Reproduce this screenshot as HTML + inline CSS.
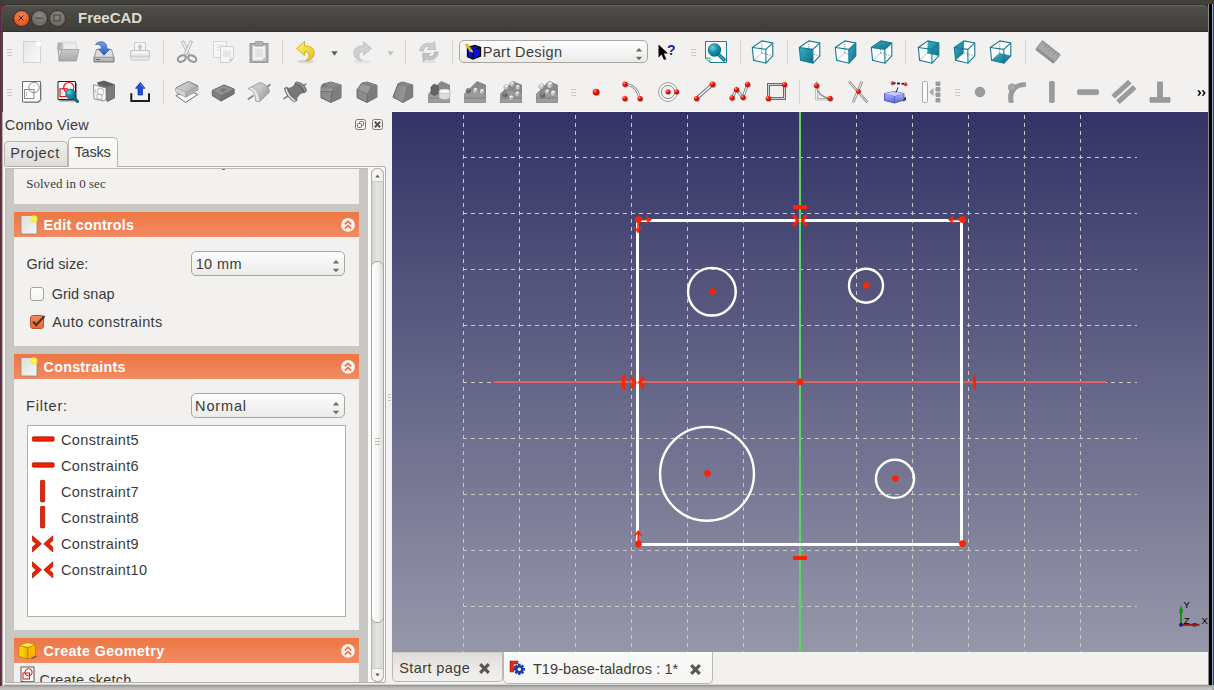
<!DOCTYPE html>
<html>
<head>
<meta charset="utf-8">
<title>FreeCAD</title>
<style>
*{box-sizing:border-box;margin:0;padding:0}
html,body{width:1214px;height:690px;overflow:hidden;background:#3c3b37;font-family:"Liberation Sans",sans-serif;color:#3c3b37;font-size:15px;line-height:18px}
.abs{position:absolute}
.t{position:absolute;white-space:nowrap;font-size:15px;line-height:18px;color:#3c3b37}
svg{position:absolute;overflow:visible}
#desk-top{left:0;top:0;width:1214px;height:5px;background:linear-gradient(#403f3a 0,#403f3a 4px,#353430 4px)}
#desk-left{left:0;top:5px;width:4px;height:681px;background:linear-gradient(90deg,#5a2a40 0,#5a2a40 1px,#b41d24 1px,#b41d24 2px,#b0ada8 2px,#b0ada8 3px,#ecebe9 3px)}
.corner{position:absolute;top:5px;width:7px;height:7px;background:#7e1216}
#desk-left2{left:2px;top:4px;width:1px;height:108px;background:#454440}
#desk-right{left:1208px;top:4px;width:6px;height:681px;background:linear-gradient(90deg,#8c8c8c 0,#8c8c8c 1px,#000 1px,#000 4px,#9aa3bd 4px,#9aa3bd 4.6px,#2b3f7c 4.6px)}
#desk-right2{left:1212px;top:685px;width:2px;height:5px;background:#a9a9ab}
#desk-bottom{left:0;top:684px;width:1214px;height:6px;background:linear-gradient(#d5d4d2 0,#d5d4d2 1px,#8f8e8c 1px,#b3b2b0 3px,#c9c8c6)}
#titlebar{left:2px;top:5px;width:1206px;height:27px;background:linear-gradient(#504f49,#4a4943 25%,#3e3d39);border-top:1px solid #67655f;border-bottom:1px solid #32312d;border-radius:5px 5px 0 0}
#title{left:78px;top:8px;font-size:15px;font-weight:bold;color:#dfdbd2;line-height:20px}
.wbtn{position:absolute;width:17px;height:17px;border-radius:50%;top:9.5px}
#win{left:3px;top:32px;width:1205px;height:652px;background:#f2f1f0}
#view{left:392px;top:112px;width:816px;height:540px;background:linear-gradient(#333366,#9797aa);overflow:hidden}
.sep{position:absolute;width:1px;height:24px;background:#d9d6d2}
.grip{position:absolute;width:5px;height:1px;background:#cdcac5;box-shadow:0 3px 0 #cdcac5,0 6px 0 #cdcac5}
.hdr{position:absolute;left:14px;width:345px;height:25px;background:linear-gradient(#ee7643,#f28b63)}
.hdr b{position:absolute;left:30px;top:3px;font-size:15px;line-height:18px;color:#fff;font-weight:bold;white-space:nowrap}
.body{position:absolute;left:14px;width:345px;background:#f2f1f0}
.combo{position:absolute;border:1px solid #aaa7a2;border-radius:5px;background:linear-gradient(#fdfdfd,#ecebea)}
</style>
</head>
<body>
<div class="abs" id="desk-top"></div>
<div class="abs" id="desk-bottom"></div>
<div class="abs" id="desk-left"></div>
<div class="abs" id="desk-left2"></div>
<div class="corner" style="left:2px"></div><div class="corner" style="left:1201px"></div>
<div class="abs" id="titlebar"></div>
<div class="abs" id="desk-right"></div>
<div class="abs" id="desk-right2"></div>
<div class="abs" id="win"></div>
<div class="wbtn" style="left:12.7px;background:radial-gradient(circle at 50% 30%,#f0855a,#df5a25 70%,#c34a1a);border:1px solid #3a2a22"></div>
<div class="wbtn" style="left:30.7px;background:radial-gradient(circle at 50% 30%,#8a8880,#6e6c65 70%,#5c5a54);border:1px solid #33322e"></div>
<div class="wbtn" style="left:48.7px;background:radial-gradient(circle at 50% 30%,#8a8880,#6e6c65 70%,#5c5a54);border:1px solid #33322e"></div>
<svg style="left:13.2px;top:10px" width="52" height="16" viewBox="0 0 52 16"><path d="M5.5 5.5l5 5m0-5l-5 5" stroke="#4a1e0c" stroke-width="1" fill="none"/><path d="M22.3 8.2h7.4" stroke="#3f3e39" stroke-width="1"/><rect x="41" y="5" width="6" height="6" fill="none" stroke="#3f3e39" stroke-width="1"/></svg>
<div class="abs" id="title">FreeCAD</div>
<svg width="0" height="0" style="left:0;top:0"><defs>
<radialGradient id="rb" cx="0.35" cy="0.3" r="0.7"><stop offset="0" stop-color="#ffb0a0"/><stop offset="0.35" stop-color="#ff2a10"/><stop offset="1" stop-color="#b00000"/></radialGradient>
<linearGradient id="gl" x1="0" y1="0" x2="1" y2="1"><stop offset="0" stop-color="#e4e4e4"/><stop offset="1" stop-color="#fafafa"/></linearGradient>
<linearGradient id="gm" x1="0" y1="0" x2="0" y2="1"><stop offset="0" stop-color="#c9c9c9"/><stop offset="1" stop-color="#a9a9a9"/></linearGradient>
<linearGradient id="gd" x1="0" y1="0" x2="1" y2="1"><stop offset="0" stop-color="#a2a2a2"/><stop offset="1" stop-color="#7e7e7e"/></linearGradient>
<linearGradient id="tl" x1="0" y1="0" x2="1" y2="1"><stop offset="0" stop-color="#3fb0c8"/><stop offset="1" stop-color="#0a6e86"/></linearGradient>
<radialGradient id="tb" cx="0.35" cy="0.3" r="0.75"><stop offset="0" stop-color="#6fd0e0"/><stop offset="0.5" stop-color="#1894ae"/><stop offset="1" stop-color="#0a6a80"/></radialGradient>
<linearGradient id="bl" x1="0" y1="0" x2="0" y2="1"><stop offset="0" stop-color="#6aa0e8"/><stop offset="1" stop-color="#2c5fb8"/></linearGradient>
<linearGradient id="yl" x1="0" y1="0" x2="1" y2="1"><stop offset="0" stop-color="#fff27a"/><stop offset="1" stop-color="#e8c21a"/></linearGradient>
<linearGradient id="bx" x1="0" y1="0" x2="0" y2="1"><stop offset="0" stop-color="#b9c4ff"/><stop offset="1" stop-color="#5a68d8"/></linearGradient>
<linearGradient id="padt" x1="0" y1="0" x2="1" y2="0.3"><stop offset="0" stop-color="#dadada"/><stop offset="1" stop-color="#b2b2b2"/></linearGradient>
<linearGradient id="revg" x1="0" y1="0" x2="1" y2="0.6"><stop offset="0" stop-color="#d6d6d6"/><stop offset="0.6" stop-color="#c2c2c2"/><stop offset="1" stop-color="#9c9c9c"/></linearGradient>
<linearGradient id="filg" x1="0" y1="0" x2="0.2" y2="1"><stop offset="0" stop-color="#6e6e6e"/><stop offset="1" stop-color="#9e9e9e"/></linearGradient>
<linearGradient id="filg2" x1="0" y1="0" x2="1" y2="0.3"><stop offset="0" stop-color="#808080"/><stop offset="1" stop-color="#9a9a9a"/></linearGradient>
</defs></svg>
<div class="sep" style="left:163px;top:40px"></div>
<div class="sep" style="left:282px;top:40px"></div>
<div class="sep" style="left:405px;top:40px"></div>
<div class="sep" style="left:452px;top:40px"></div>
<div class="sep" style="left:740px;top:40px"></div>
<div class="sep" style="left:787px;top:40px"></div>
<div class="sep" style="left:905px;top:40px"></div>
<div class="sep" style="left:1025px;top:40px"></div>
<div class="sep" style="left:163px;top:80px"></div>
<div class="sep" style="left:799px;top:80px"></div>
<div class="grip" style="left:7px;top:49px"></div>
<div class="grip" style="left:690.5px;top:49px"></div>
<div class="grip" style="left:7px;top:89px"></div>
<div class="grip" style="left:570.5px;top:89px"></div>
<div class="grip" style="left:955px;top:89px"></div>
<svg style="left:20px;top:40px" width="24" height="24" viewBox="0 0 24 24"><rect x="3.5" y="1.5" width="17" height="21" fill="url(#gl)" stroke="#d2d2d2"/><circle cx="18.5" cy="4" r="2.8" fill="#fff" opacity="0.95"/></svg>
<svg style="left:56px;top:40px" width="24" height="24" viewBox="0 0 24 24"><path d="M2 3h7l1.500 2h9.500v5h-18z" fill="#b8b8b8" stroke="#a2a2a2" stroke-width="0.800"/><path d="M6.500 2h13.500v9h-13.500z" fill="#f5f5f5" stroke="#c6c6c6" stroke-width="0.700"/><path d="M7.500 3.500h13v8h-13z" fill="#ededed" stroke="#cdcdcd" stroke-width="0.500"/><path d="M5.500 9.500h17.500l-2.600 11.500H2.800z" fill="url(#gm)" stroke="#9c9c9c" stroke-width="0.800"/><path d="M2 6l1.200 14.500" stroke="#a2a2a2" stroke-width="1.200"/></svg>
<svg style="left:92px;top:40px" width="24" height="24" viewBox="0 0 24 24"><path d="M4.5 9.5h15l2.5 8v4.5h-20V17.5z" fill="#dcdcdc" stroke="#8a8a8a" stroke-width="0.9"/><path d="M2.3 17.3h19.4v4.4H2.3z" fill="url(#gm)" stroke="#7e7e7e" stroke-width="0.8"/><path d="M4 19.5h4" stroke="#666" stroke-width="1"/><path d="M15 19h4.5v1.6H15z" fill="#bdbdbd"/><path d="M3.5 4.5C6 0.8 12.5 0.3 14.6 5.5L14.8 9h3L12 15.2 6.6 9h3.2C9.8 6 7.5 3.8 3.5 4.5z" fill="url(#bl)" stroke="#2a56a8" stroke-width="0.7"/></svg>
<svg style="left:128px;top:40px" width="24" height="24" viewBox="0 0 24 24"><rect x="6.5" y="2.5" width="11" height="9" fill="#f5f5f5" stroke="#cfcfcf"/><path d="M12 4l3 3.2h-1.8V10h-2.4V7.2H9z" fill="#c4c4c4"/><path d="M2.5 12q0-1.5 1.5-1.5h16q1.500 0 1.500 1.500v6.500q0 1.500-1.500 1.500h-16q-1.500 0-1.500-1.500z" fill="#ececec" stroke="#c4c4c4"/><path d="M3 16.500h18" stroke="#d0d0d0" stroke-width="2"/><path d="M5 12.500h14" stroke="#fff" stroke-width="1.500"/></svg>
<svg style="left:175px;top:40px" width="24" height="24" viewBox="0 0 24 24"><path d="M6.500 1.500L9 1L14.500 13.500L12.500 15z" fill="#f1f1f1" stroke="#a9a9a9" stroke-width="0.800"/><path d="M17.500 1.500L15 1L9.500 13.500L11.500 15z" fill="#f1f1f1" stroke="#a9a9a9" stroke-width="0.800"/><ellipse cx="6.800" cy="18.600" rx="4.300" ry="2.900" transform="rotate(-28 6.800 18.600)" fill="none" stroke="#969696" stroke-width="2.100"/><ellipse cx="17.200" cy="18.600" rx="4.300" ry="2.900" transform="rotate(28 17.200 18.600)" fill="none" stroke="#969696" stroke-width="2.100"/></svg>
<svg style="left:211px;top:40px" width="24" height="24" viewBox="0 0 24 24"><rect x="2.500" y="1.500" width="13" height="16" fill="#f7f7f7" stroke="#d6d6d6"/><path d="M5 5h8M5 7.500h8M5 10h8" stroke="#e2e2e2"/><path d="M9.500 6.500h13v12l-4 4h-9z" fill="#f7f7f7" stroke="#cdcdcd"/><path d="M12 10.500h8v6.500h-8z" fill="#e6e6e6"/><path d="M22.500 18.500h-4v4z" fill="#c9c9c9"/></svg>
<svg style="left:247px;top:40px" width="24" height="24" viewBox="0 0 24 24"><rect x="3" y="3.500" width="18" height="19" fill="#a9a9a9" stroke="#9a9a9a"/><rect x="5.500" y="5.500" width="13" height="15" fill="#f1f1f1"/><path d="M8 9h8v8H8z" fill="#e2e2e2"/><path d="M8 2.500q0-1 1-1h6q1 0 1 1V6H8z" fill="#b3b3b3" stroke="#9a9a9a" stroke-width="0.800"/><path d="M18.500 16.500v4h-4z" fill="#bdbdbd"/></svg>
<svg style="left:294px;top:40px" width="24" height="24" viewBox="0 0 24 24"><ellipse cx="12" cy="21.500" rx="8.500" ry="1.800" fill="#000" opacity="0.120"/><path d="M2.500 8.500L10.500 1.500V6C18 5.500 22 10.500 19.500 16C18 19.500 14.500 21 11.500 20.500C15.500 18.500 16 14.500 13.500 12.500C12.500 11.700 11.500 11.500 10.500 11.500V15.500z" fill="url(#yl)" stroke="#c9a400" stroke-width="0.800"/></svg>
<svg style="left:331px;top:51px" width="7" height="5" viewBox="0 0 7 5"><path d="M0.200 0.300h6.600L3.500 4.800z" fill="#5e5e5c"/></svg>
<svg style="left:350px;top:40px" width="24" height="24" viewBox="0 0 24 24"><ellipse cx="12" cy="21.500" rx="8.500" ry="1.800" fill="#000" opacity="0.060"/><path d="M21.500 8.500L13.500 1.500V6C6 5.500 2 10.500 4.500 16C6 19.500 9.500 21 12.500 20.500C8.500 18.500 8 14.500 10.500 12.500C11.500 11.700 12.500 11.500 13.500 11.500V15.500z" fill="#cfcfcf" stroke="#bdbdbd" stroke-width="0.800"/></svg>
<svg style="left:387px;top:51px" width="7" height="5" viewBox="0 0 7 5"><path d="M0.200 0.300h6.600L3.500 4.800z" fill="#c2c2c0"/></svg>
<svg style="left:417px;top:40px" width="24" height="24" viewBox="0 0 24 24"><ellipse cx="12" cy="21.800" rx="8" ry="1.500" fill="#000" opacity="0.070"/><path d="M3 11C3 5 9 1.500 15 4L17.500 1.500L18.500 9.500H10.500L13 7C9.500 5.500 6.500 7.500 6.500 11z" fill="#cdcdcd" stroke="#b5b5b5" stroke-width="0.800"/><path d="M21 12C21 18 15 21.500 9 19L6.500 21.500L5.500 13.500H13.500L11 16C14.500 17.500 17.500 15.500 17.500 12z" fill="#c4c4c4" stroke="#b0b0b0" stroke-width="0.800"/></svg>
<div class="combo" style="left:459px;top:40px;width:189px;height:23px"></div>
<svg style="left:464px;top:43px" width="18" height="18" viewBox="0 0 18 18"><path d="M3.500 4.500L11 2.500L16.500 4.500V13L9 16L3.500 13.500z" fill="#0a10d8" stroke="#000" stroke-width="1.300"/><path d="M9 7V16M3.500 4.500L9 7L16.500 4.500" fill="none" stroke="#000" stroke-width="1.100"/><path d="M1 1.500L3.500 0.800L8.500 7.500L6 8.800z" fill="#e8c21a" stroke="#b79400" stroke-width="0.400"/><path d="M6 8.800l2.500-1.300l0.700 2z" fill="#ddd"/></svg>
<svg style="left:634.5px;top:46.5px" width="8" height="14" viewBox="0 0 8 14"><path d="M0.8 4.4L4 1L7.2 4.4z M0.8 9.8L4 13.200L7.2 9.8z" fill="#6d6b66"/></svg>
<svg style="left:655px;top:40px" width="24" height="24" viewBox="0 0 24 24"><path d="M3.500 4.500V17.500L6.500 14.500L9 20L11.300 19L8.800 13.600H13z" fill="#000"/><text x="12" y="14.500" font-family="Liberation Sans" font-weight="bold" font-size="14" fill="#1c1c9c">?</text></svg>
<svg style="left:704px;top:40px" width="24" height="24" viewBox="0 0 24 24"><path d="M1.500 1.500h21v21H6l-4.500-4.500z" fill="#fafafa" stroke="#1d7d92" stroke-width="1"/><path d="M1.500 18h4.500v4.500" fill="none" stroke="#1d7d92" stroke-width="0.800"/><path d="M14.500 14.500L20 19.800" stroke="#0d6a80" stroke-width="3.600" stroke-linecap="round"/><path d="M14.500 14.500L19.800 19.600" stroke="#3aa6bc" stroke-width="1.600" stroke-linecap="round"/><circle cx="10.500" cy="10" r="6.300" fill="url(#tb)" stroke="#0b6e84" stroke-width="0.800"/></svg>
<svg style="left:751px;top:40px" width="24" height="24" viewBox="0 0 24 24"><polygon points="1.3,7.5 11,0.9 21.8,2.9 21.8,15.8 15,23.2 2.6,20.3" fill="#fdfdfd"/><path d="M11 0.9L10.5 13.2L2.6 20.3M10.5 13.2L21.8 15.8" fill="none" stroke="#2a8296" stroke-width="0.700" stroke-dasharray="1.500 1.200"/><polygon points="1.3,7.5 11,0.9 21.8,2.9 21.8,15.8 15,23.2 2.6,20.3" fill="none" stroke="#157a90" stroke-width="1.100"/><path d="M1.3 7.5L14.8 9.3L21.8 2.9M14.8 9.3L15 23.2" fill="none" stroke="#157a90" stroke-width="1.100"/></svg>
<svg style="left:798px;top:40px" width="24" height="24" viewBox="0 0 24 24"><polygon points="1.3,7.5 11,0.9 21.8,2.9 21.8,15.8 15,23.2 2.6,20.3" fill="#fdfdfd"/><polygon points="1.3,7.5 14.8,9.3 15,23.2 2.6,20.3" fill="url(#tl)"/><path d="M11 0.9L10.5 13.2L2.6 20.3M10.5 13.2L21.8 15.8" fill="none" stroke="#2a8296" stroke-width="0.700" stroke-dasharray="1.500 1.200"/><polygon points="1.3,7.5 11,0.9 21.8,2.9 21.8,15.8 15,23.2 2.6,20.3" fill="none" stroke="#157a90" stroke-width="1.100"/><path d="M1.3 7.5L14.8 9.3L21.8 2.9M14.8 9.3L15 23.2" fill="none" stroke="#157a90" stroke-width="1.100"/></svg>
<svg style="left:834px;top:40px" width="24" height="24" viewBox="0 0 24 24"><polygon points="1.3,7.5 11,0.9 21.8,2.9 21.8,15.8 15,23.2 2.6,20.3" fill="#fdfdfd"/><polygon points="14.8,9.3 21.8,2.9 21.8,15.8 15,23.2" fill="url(#tl)"/><path d="M11 0.9L10.5 13.2L2.6 20.3M10.5 13.2L21.8 15.8" fill="none" stroke="#2a8296" stroke-width="0.700" stroke-dasharray="1.500 1.200"/><polygon points="1.3,7.5 11,0.9 21.8,2.9 21.8,15.8 15,23.2 2.6,20.3" fill="none" stroke="#157a90" stroke-width="1.100"/><path d="M1.3 7.5L14.8 9.3L21.8 2.9M14.8 9.3L15 23.2" fill="none" stroke="#157a90" stroke-width="1.100"/></svg>
<svg style="left:870px;top:40px" width="24" height="24" viewBox="0 0 24 24"><polygon points="1.3,7.5 11,0.9 21.8,2.9 21.8,15.8 15,23.2 2.6,20.3" fill="#fdfdfd"/><polygon points="1.3,7.5 11,0.9 21.8,2.9 14.8,9.3" fill="url(#tl)"/><path d="M11 0.9L10.5 13.2L2.6 20.3M10.5 13.2L21.8 15.8" fill="none" stroke="#2a8296" stroke-width="0.700" stroke-dasharray="1.500 1.200"/><polygon points="1.3,7.5 11,0.9 21.8,2.9 21.8,15.8 15,23.2 2.6,20.3" fill="none" stroke="#157a90" stroke-width="1.100"/><path d="M1.3 7.5L14.8 9.3L21.8 2.9M14.8 9.3L15 23.2" fill="none" stroke="#157a90" stroke-width="1.100"/></svg>
<svg style="left:917px;top:40px" width="24" height="24" viewBox="0 0 24 24"><polygon points="1.3,7.5 11,0.9 21.8,2.9 21.8,15.8 15,23.2 2.6,20.3" fill="#fdfdfd"/><polygon points="11,0.9 21.8,2.9 21.8,15.8 10.5,13.2" fill="url(#tl)"/><path d="M11 0.9L10.5 13.2L2.6 20.3M10.5 13.2L21.8 15.8" fill="none" stroke="#2a8296" stroke-width="0.700" stroke-dasharray="1.500 1.200"/><polygon points="1.3,7.5 11,0.9 21.8,2.9 21.8,15.8 15,23.2 2.6,20.3" fill="none" stroke="#157a90" stroke-width="1.100"/><path d="M1.3 7.5L14.8 9.3L21.8 2.9M14.8 9.3L15 23.2" fill="none" stroke="#157a90" stroke-width="1.100"/></svg>
<svg style="left:953px;top:40px" width="24" height="24" viewBox="0 0 24 24"><polygon points="1.3,7.5 11,0.9 21.8,2.9 21.8,15.8 15,23.2 2.6,20.3" fill="#fdfdfd"/><polygon points="1.3,7.5 11,0.9 10.5,13.2 2.6,20.3" fill="url(#tl)"/><path d="M11 0.9L10.5 13.2L2.6 20.3M10.5 13.2L21.8 15.8" fill="none" stroke="#2a8296" stroke-width="0.700" stroke-dasharray="1.500 1.200"/><polygon points="1.3,7.5 11,0.9 21.8,2.9 21.8,15.8 15,23.2 2.6,20.3" fill="none" stroke="#157a90" stroke-width="1.100"/><path d="M1.3 7.5L14.8 9.3L21.8 2.9M14.8 9.3L15 23.2" fill="none" stroke="#157a90" stroke-width="1.100"/></svg>
<svg style="left:989px;top:40px" width="24" height="24" viewBox="0 0 24 24"><polygon points="1.3,7.5 11,0.9 21.8,2.9 21.8,15.8 15,23.2 2.6,20.3" fill="#fdfdfd"/><polygon points="2.6,20.3 10.5,13.2 21.8,15.8 15,23.2" fill="url(#tl)"/><path d="M11 0.9L10.5 13.2L2.6 20.3M10.5 13.2L21.8 15.8" fill="none" stroke="#2a8296" stroke-width="0.700" stroke-dasharray="1.500 1.200"/><polygon points="1.3,7.5 11,0.9 21.8,2.9 21.8,15.8 15,23.2 2.6,20.3" fill="none" stroke="#157a90" stroke-width="1.100"/><path d="M1.3 7.5L14.8 9.3L21.8 2.9M14.8 9.3L15 23.2" fill="none" stroke="#157a90" stroke-width="1.100"/></svg>
<svg style="left:1036px;top:40px" width="24" height="24" viewBox="0 0 24 24"><g transform="rotate(38 12 12)"><rect x="0.500" y="6.500" width="23" height="9" fill="#a8a8a8" stroke="#8e8e8e" stroke-width="0.800"/><path d="M3 6.500v3M6 6.500v4M9 6.500v3M12 6.500v4M15 6.500v3M18 6.500v4M21 6.500v3" stroke="#7a7a7a" stroke-width="0.800"/><path d="M0.500 15.500h23v2.500h-23z" fill="#8c8c8c"/></g></svg>
<svg style="left:20px;top:80px" width="24" height="24" viewBox="0 0 24 24"><path d="M4.500 3.500h17v17l-2.500 2.500h-14.500z" fill="#a8a8a8"/><path d="M2.500 1.500h18v18l-2.500 2.500h-15.500z" fill="#fcfcfc" stroke="#6e6e6e" stroke-width="1"/><circle cx="14" cy="7.500" r="5.200" fill="none" stroke="#8e8e8e" stroke-width="1"/><rect x="4.500" y="9.500" width="9.500" height="9" fill="none" stroke="#8e8e8e" stroke-width="1"/><path d="M6.500 12v4M13.500 5l1.500 1.500" stroke="#b0b0b0" stroke-width="0.800"/></svg>
<svg style="left:56px;top:80px" width="24" height="24" viewBox="0 0 24 24"><path d="M3.500 3h17.500v18.500h-17.500z" fill="#8a8a8a"/><path d="M2 1.500h17.500v18h-17.500z" fill="#fcfcfc" stroke="#222" stroke-width="1"/><circle cx="12.800" cy="7.600" r="5.100" fill="none" stroke="#f01010" stroke-width="1.200"/><rect x="4" y="8.800" width="7.200" height="7.800" fill="none" stroke="#f01010" stroke-width="1.200"/><path d="M6 11.500v3" stroke="#aaa" stroke-width="0.800"/><path d="M17 17L21.500 21.300" stroke="#0d6a80" stroke-width="3.200" stroke-linecap="round"/><circle cx="14.500" cy="14" r="4.900" fill="url(#tb)" stroke="#0b6e84" stroke-width="0.700"/></svg>
<svg style="left:92px;top:80px" width="24" height="24" viewBox="0 0 24 24"><path d="M5.400 2.800L12 1L22.500 4.700V17.900L15.300 21.600z" fill="#6a6a6a" stroke="#555" stroke-width="0.700"/><path d="M15.300 6.700L22.500 4.700V17.900L15.300 21.600z" fill="#7c7c7c"/><path d="M5.400 2.800L12 1L22.500 4.700L15.300 6.700z" fill="#5e5e5e"/><path d="M1.400 4.700L14 8V18.500L12 21L2.100 19z" fill="#f7f7f7" stroke="#8a8a8a" stroke-width="0.900"/><circle cx="8.500" cy="11.500" r="3.300" fill="none" stroke="#b0b0b0" stroke-width="0.900"/><path d="M5 14l5 1v4.500l-5-1z" fill="none" stroke="#b0b0b0" stroke-width="0.900"/><path d="M3.500 9v4" stroke="#c0c0c0" stroke-width="0.800"/></svg>
<svg style="left:128px;top:80px" width="24" height="24" viewBox="0 0 24 24"><path d="M3.300 13.200v7.700h17.700v-7.700" fill="none" stroke="#1e1e1e" stroke-width="2"/><path d="M12.300 2.500L17 8.300H14.500V15H10V8.300H7.500z" fill="#1a4fe0" stroke="#0a2a9a" stroke-width="0.700"/><path d="M12.300 4L15.500 8" stroke="#6a9aff" stroke-width="0.700"/></svg>
<svg style="left:175px;top:80px" width="24" height="24" viewBox="0 0 24 24"><path d="M0.900 15.500L12.500 10.500L22.900 14.500L10.500 22.400z" fill="#fdfdfd" stroke="#5e5e5e" stroke-width="0.900"/><path d="M0.900 7.900L13.400 1.600L22.900 5.900V9.900L10.800 17.100L1.100 12.100z" fill="#c4c4c4" stroke="#6a6a6a" stroke-width="0.800"/><path d="M0.900 7.900L13.400 1.600L22.900 5.900L10.800 12.500z" fill="url(#padt)" stroke="#777" stroke-width="0.600"/><path d="M0.900 7.900L10.800 12.500V17.100L1.100 12.100z" fill="#d4d4d4"/><path d="M10.800 12.500L22.900 5.900V9.900L10.800 17.100z" fill="#b0b0b0"/><path d="M10.800 12.500V17.100" stroke="#7a7a7a" stroke-width="0.600"/></svg>
<svg style="left:211px;top:80px" width="24" height="24" viewBox="0 0 24 24"><path d="M1.200 10.500L13 5L23.200 9.200V13.800L10.100 21.100L1.400 15.800z" fill="#808080" stroke="#5a5a5a" stroke-width="0.800"/><path d="M1.200 10.500L13 5L23.200 9.200L10.100 15.500z" fill="#929292" stroke="#636363" stroke-width="0.600"/><path d="M10.100 15.500v5.600" stroke="#5a5a5a" stroke-width="0.700"/><path d="M10.100 15.500L23.200 9.200V13.800L10.100 21.100z" fill="#727272"/><path d="M8.500 9.800L12.500 8L16 9.500L11.500 12.500z" fill="#777"/></svg>
<svg style="left:247px;top:80px" width="24" height="24" viewBox="0 0 24 24"><path d="M0.800 19.500L6.500 15.500" stroke="#8c8c8c" stroke-width="2"/><path d="M19.500 7.500L23.500 4.200" stroke="#8c8c8c" stroke-width="2"/><path d="M1.400 8.600L12.600 2.600C18 3.500 22 7 22.500 12L12.600 21.700L8.700 21C9 15 6 10.500 1.400 8.600z" fill="url(#revg)" stroke="#8e8e8e" stroke-width="0.800"/><path d="M1.400 8.600L4.500 7C9.500 9 13 14.500 12.600 21.700L8.700 21C9 15 6 10.500 1.400 8.600z" fill="#e4e4e4" stroke="#9a9a9a" stroke-width="0.600"/></svg>
<svg style="left:283px;top:80px" width="24" height="24" viewBox="0 0 24 24"><path d="M0.400 19.100L5.500 15.500" stroke="#8c8c8c" stroke-width="1.800"/><path d="M20 5.500L23.500 3.700" stroke="#8c8c8c" stroke-width="1.600"/><path d="M3 8.500C8 8.500 10.500 7 12.300 3.500C17 4.500 20.500 8 21.500 12.500C17 13 15 15.500 13 20.500C8 19 4.500 14 3 8.500z" fill="#787878" stroke="#555" stroke-width="0.600"/><path d="M12.900 2C18.500 2 23 6 23.500 11L21.300 12.800C20.500 8.500 17 4.800 12 4z" fill="#8e8e8e" stroke="#4e4e4e" stroke-width="0.700"/><path d="M16 5.500C18.500 7 20 9.500 20.500 12" fill="none" stroke="#5a5a5a" stroke-width="0.900"/><path d="M1.400 8.200L4.200 7.300C5.500 13 9.500 18.500 14.200 20.300L11.600 21.700C6.500 19.500 2.500 14 1.400 8.200z" fill="#9c9c9c" stroke="#4e4e4e" stroke-width="0.700"/><path d="M2.900 9C4.500 14 8 18.500 12.300 20.800" fill="none" stroke="#efefef" stroke-width="1.100"/></svg>
<svg style="left:319px;top:80px" width="24" height="24" viewBox="0 0 24 24"><path d="M2 9.200C2 5.500 3.500 4 5.300 3.700L11.900 2L22 5V17.800L11.900 22.400L2 17.800z" fill="#8c8c8c" stroke="#555" stroke-width="0.900"/><path d="M5.300 3.700L11.900 2L22 5L14.500 7.200z" fill="#8a8a8a"/><path d="M2 9.200C2 5.500 3.500 4 5.300 3.700L14.500 7.200C13.500 8 13.100 9.500 13.100 11.600L2 11.600z" fill="url(#filg)"/><path d="M2 11.600H13.100" stroke="#5e5e5e" stroke-width="0.700"/><path d="M13.100 11.600C13.100 9.500 13.500 8 14.500 7.200L22 5V17.800L11.900 22.400L13.100 11.600z" fill="#7e7e7e"/><path d="M13.100 11.600L11.900 22.400" stroke="#5e5e5e" stroke-width="0.700"/></svg>
<svg style="left:355px;top:80px" width="24" height="24" viewBox="0 0 24 24"><path d="M2.100 9.900L6.700 3.300L12 2L21.900 5.300V17.100L12 22.400L2.100 17.800z" fill="#8c8c8c" stroke="#555" stroke-width="0.900"/><path d="M6.700 3.300L12 2L21.900 5.300L16.600 6.300z" fill="#8a8a8a"/><path d="M2.100 9.900L6.700 3.300L16.600 6.300L12.600 13.800z" fill="#999" stroke="#636363" stroke-width="0.600"/><path d="M16.600 6.300L21.900 5.300V17.100L12 22.400L12.600 13.800z" fill="#7c7c7c"/><path d="M12.600 13.800L12 22.400" stroke="#5e5e5e" stroke-width="0.700"/></svg>
<svg style="left:391px;top:80px" width="24" height="24" viewBox="0 0 24 24"><path d="M2 17.100L7.200 3.700L11.600 2L21.700 5V17.100L12 22.400z" fill="#8c8c8c" stroke="#555" stroke-width="0.900"/><path d="M7.200 3.700L11.600 2L21.700 5L16.200 6.600z" fill="#8a8a8a"/><path d="M7.200 3.700L16.200 6.600L12 22.400L2 17.100z" fill="url(#filg2)" stroke="#636363" stroke-width="0.500"/><path d="M16.200 6.600L21.700 5V17.100L12 22.400z" fill="#7e7e7e"/></svg>
<svg style="left:427px;top:80px" width="24" height="24" viewBox="0 0 24 24"><path d="M1.500 14L14 1.500L22.500 5V22.500H1.500z" fill="#8a8a8a" stroke="#6a6a6a" stroke-width="0.600"/><path d="M1.500 14L10 10.500L22.500 14.500V22.500H1.500z" fill="#9c9c9c"/><path d="M1.500 18h21" stroke="#777" stroke-width="0.800"/><path d="M4 7L7 4L11.200 6V13.500L7.500 15.800L4 13.500z" fill="#666" stroke="#4a4a4a" stroke-width="0.600"/><path d="M12 11.500C12 8 23 8 23 11.500V17C23 20.500 12 20.500 12 17z" fill="#dedede" stroke="#8a8a8a" stroke-width="0.500"/><ellipse cx="17.500" cy="11.300" rx="5.300" ry="2.300" fill="#f7f7f7" stroke="#9a9a9a" stroke-width="0.400"/></svg>
<svg style="left:463px;top:80px" width="24" height="24" viewBox="0 0 24 24"><path d="M1.500 14L14 1.500L22.500 5V22.500H1.500z" fill="#8a8a8a" stroke="#6a6a6a" stroke-width="0.600"/><path d="M1.500 14L10 10.500L22.500 14.500V22.500H1.500z" fill="#9c9c9c"/><path d="M1.500 18h21" stroke="#777" stroke-width="0.800"/><g transform="translate(3,8) scale(0.9)"><path d="M0 1.500L2.500 0L5 1.500L2.500 3z" fill="#8c8c8c"/><path d="M0 1.500L2.500 3V6L0 4.500z" fill="#6e6e6e"/><path d="M2.500 3L5 1.500V4.500L2.500 6z" fill="#5c5c5c"/><path d="M0 1.500L2.500 0L5 1.500V4.500L2.500 6L0 4.500z" fill="none" stroke="#6a6a6a" stroke-width="0.400"/></g><g transform="translate(10,7.5) scale(1)"><path d="M0 1.500L2.500 0L5 1.500L2.500 3z" fill="#f4f4f4"/><path d="M0 1.500L2.500 3V6L0 4.500z" fill="#d2d2d2"/><path d="M2.500 3L5 1.500V4.500L2.500 6z" fill="#b8b8b8"/><path d="M0 1.500L2.500 0L5 1.500V4.500L2.500 6L0 4.500z" fill="none" stroke="#6a6a6a" stroke-width="0.400"/></g><g transform="translate(16.5,8.5) scale(1)"><path d="M0 1.500L2.500 0L5 1.500L2.500 3z" fill="#f4f4f4"/><path d="M0 1.500L2.500 3V6L0 4.500z" fill="#d2d2d2"/><path d="M2.500 3L5 1.500V4.500L2.500 6z" fill="#b8b8b8"/><path d="M0 1.500L2.500 0L5 1.500V4.500L2.500 6L0 4.500z" fill="none" stroke="#6a6a6a" stroke-width="0.400"/></g></svg>
<svg style="left:499px;top:80px" width="24" height="24" viewBox="0 0 24 24"><path d="M1.500 14L14 1.500L22.500 5V22.500H1.500z" fill="#8a8a8a" stroke="#6a6a6a" stroke-width="0.600"/><path d="M1.500 14L10 10.500L22.500 14.500V22.500H1.500z" fill="#9c9c9c"/><path d="M1.500 18h21" stroke="#777" stroke-width="0.800"/><g transform="translate(5,4.5) scale(0.95)"><path d="M0 1.500L2.500 0L5 1.500L2.500 3z" fill="#f4f4f4"/><path d="M0 1.500L2.500 3V6L0 4.500z" fill="#d2d2d2"/><path d="M2.500 3L5 1.500V4.500L2.500 6z" fill="#b8b8b8"/><path d="M0 1.500L2.500 0L5 1.500V4.500L2.500 6L0 4.500z" fill="none" stroke="#6a6a6a" stroke-width="0.400"/></g><g transform="translate(11,1.5) scale(0.95)"><path d="M0 1.500L2.500 0L5 1.500L2.500 3z" fill="#f4f4f4"/><path d="M0 1.500L2.500 3V6L0 4.500z" fill="#d2d2d2"/><path d="M2.500 3L5 1.500V4.500L2.500 6z" fill="#b8b8b8"/><path d="M0 1.500L2.500 0L5 1.500V4.500L2.500 6L0 4.500z" fill="none" stroke="#6a6a6a" stroke-width="0.400"/></g><g transform="translate(16.5,4.5) scale(0.95)"><path d="M0 1.500L2.500 0L5 1.500L2.500 3z" fill="#f4f4f4"/><path d="M0 1.500L2.500 3V6L0 4.500z" fill="#d2d2d2"/><path d="M2.500 3L5 1.500V4.500L2.500 6z" fill="#b8b8b8"/><path d="M0 1.500L2.500 0L5 1.500V4.500L2.500 6L0 4.500z" fill="none" stroke="#6a6a6a" stroke-width="0.400"/></g><g transform="translate(3.5,11.5) scale(1)"><path d="M0 1.500L2.500 0L5 1.500L2.500 3z" fill="#8c8c8c"/><path d="M0 1.500L2.500 3V6L0 4.500z" fill="#6e6e6e"/><path d="M2.500 3L5 1.500V4.500L2.500 6z" fill="#5c5c5c"/><path d="M0 1.500L2.500 0L5 1.500V4.500L2.500 6L0 4.500z" fill="none" stroke="#6a6a6a" stroke-width="0.400"/></g><g transform="translate(16,11) scale(0.95)"><path d="M0 1.500L2.500 0L5 1.500L2.500 3z" fill="#f4f4f4"/><path d="M0 1.500L2.500 3V6L0 4.500z" fill="#d2d2d2"/><path d="M2.500 3L5 1.500V4.500L2.500 6z" fill="#b8b8b8"/><path d="M0 1.500L2.500 0L5 1.500V4.500L2.500 6L0 4.500z" fill="none" stroke="#6a6a6a" stroke-width="0.400"/></g><g transform="translate(10,15) scale(0.95)"><path d="M0 1.500L2.500 0L5 1.500L2.500 3z" fill="#f4f4f4"/><path d="M0 1.500L2.500 3V6L0 4.500z" fill="#d2d2d2"/><path d="M2.500 3L5 1.500V4.500L2.500 6z" fill="#b8b8b8"/><path d="M0 1.500L2.500 0L5 1.500V4.500L2.500 6L0 4.500z" fill="none" stroke="#6a6a6a" stroke-width="0.400"/></g></svg>
<svg style="left:535px;top:80px" width="24" height="24" viewBox="0 0 24 24"><path d="M1.500 14L14 1.500L22.500 5V22.500H1.500z" fill="#8a8a8a" stroke="#6a6a6a" stroke-width="0.600"/><path d="M1.500 14L10 10.500L22.500 14.500V22.500H1.500z" fill="#9c9c9c"/><path d="M1.500 18h21" stroke="#777" stroke-width="0.800"/><g transform="translate(4,3.5) scale(1)"><path d="M0 1.500L2.500 0L5 1.500L2.500 3z" fill="#f4f4f4"/><path d="M0 1.500L2.500 3V6L0 4.500z" fill="#d2d2d2"/><path d="M2.500 3L5 1.500V4.500L2.500 6z" fill="#b8b8b8"/><path d="M0 1.500L2.500 0L5 1.500V4.500L2.500 6L0 4.500z" fill="none" stroke="#6a6a6a" stroke-width="0.400"/></g><g transform="translate(12,1.5) scale(1.2)"><path d="M0 1.500L2.500 0L5 1.500L2.500 3z" fill="#f4f4f4"/><path d="M0 1.500L2.500 3V6L0 4.500z" fill="#d2d2d2"/><path d="M2.500 3L5 1.500V4.500L2.500 6z" fill="#b8b8b8"/><path d="M0 1.500L2.500 0L5 1.500V4.500L2.500 6L0 4.500z" fill="none" stroke="#6a6a6a" stroke-width="0.400"/></g><g transform="translate(15.5,10) scale(1.1)"><path d="M0 1.500L2.500 0L5 1.500L2.500 3z" fill="#f4f4f4"/><path d="M0 1.500L2.500 3V6L0 4.500z" fill="#d2d2d2"/><path d="M2.500 3L5 1.500V4.500L2.500 6z" fill="#b8b8b8"/><path d="M0 1.500L2.500 0L5 1.500V4.500L2.500 6L0 4.500z" fill="none" stroke="#6a6a6a" stroke-width="0.400"/></g><g transform="translate(5,12) scale(1)"><path d="M0 1.500L2.500 0L5 1.500L2.500 3z" fill="#8c8c8c"/><path d="M0 1.500L2.500 3V6L0 4.500z" fill="#6e6e6e"/><path d="M2.500 3L5 1.500V4.500L2.500 6z" fill="#5c5c5c"/><path d="M0 1.500L2.500 0L5 1.500V4.500L2.500 6L0 4.500z" fill="none" stroke="#6a6a6a" stroke-width="0.400"/></g><g transform="translate(10,9) scale(0.9)"><path d="M0 1.500L2.500 0L5 1.500L2.500 3z" fill="#f4f4f4"/><path d="M0 1.500L2.500 3V6L0 4.500z" fill="#d2d2d2"/><path d="M2.500 3L5 1.500V4.500L2.500 6z" fill="#b8b8b8"/><path d="M0 1.500L2.500 0L5 1.500V4.500L2.500 6L0 4.500z" fill="none" stroke="#6a6a6a" stroke-width="0.400"/></g></svg>
<svg style="left:584px;top:80px" width="24" height="24" viewBox="0 0 24 24"><circle cx="12.8" cy="12.9" r="3.3" fill="#777" opacity="0.55"/><circle cx="12" cy="12" r="3.3" fill="url(#rb)"/></svg>
<svg style="left:620px;top:80px" width="24" height="24" viewBox="0 0 24 24"><path d="M5.500 4.500C12.500 4.500 18.500 10 19.500 18.500" fill="none" stroke="#777" stroke-width="2.600"/><path d="M5.500 4.500C12.500 4.500 18.500 10 19.500 18.500" fill="none" stroke="#fafafa" stroke-width="1.200"/><circle cx="5.8" cy="5.1000000000000005" r="2.6" fill="#777" opacity="0.55"/><circle cx="5" cy="4.2" r="2.6" fill="url(#rb)"/><circle cx="5.6" cy="19.4" r="2.6" fill="#777" opacity="0.55"/><circle cx="4.8" cy="18.5" r="2.6" fill="url(#rb)"/><circle cx="20.8" cy="19.4" r="2.6" fill="#777" opacity="0.55"/><circle cx="20" cy="18.5" r="2.6" fill="url(#rb)"/></svg>
<svg style="left:656px;top:80px" width="24" height="24" viewBox="0 0 24 24"><circle cx="12" cy="12" r="9.300" fill="none" stroke="#8a8a8a" stroke-width="1"/><circle cx="12" cy="12" r="8" fill="none" stroke="#fafafa" stroke-width="1.600"/><circle cx="12" cy="12" r="6.700" fill="none" stroke="#8a8a8a" stroke-width="1"/><circle cx="12.8" cy="12.6" r="2.5" fill="#777" opacity="0.55"/><circle cx="12" cy="11.7" r="2.5" fill="url(#rb)"/><circle cx="21.3" cy="12.6" r="2.5" fill="#777" opacity="0.55"/><circle cx="20.5" cy="11.7" r="2.5" fill="url(#rb)"/></svg>
<svg style="left:692px;top:80px" width="24" height="24" viewBox="0 0 24 24"><path d="M4.500 18.500L20.500 4.500" stroke="#6e6e6e" stroke-width="3.600"/><path d="M4.500 18.500L20.500 4.500" stroke="#fafafa" stroke-width="1.600"/><circle cx="5.3" cy="19.4" r="2.6" fill="#777" opacity="0.55"/><circle cx="4.5" cy="18.5" r="2.6" fill="url(#rb)"/><circle cx="21.3" cy="5.2" r="2.8" fill="#777" opacity="0.55"/><circle cx="20.5" cy="4.3" r="2.8" fill="url(#rb)"/></svg>
<svg style="left:728px;top:80px" width="24" height="24" viewBox="0 0 24 24"><path d="M4 18L8.500 9.500L15 17.500L19.500 4.500" fill="none" stroke="#777" stroke-width="2.800"/><path d="M4 18L8.500 9.500L15 17.500L19.500 4.500" fill="none" stroke="#fafafa" stroke-width="1.200"/><circle cx="4.8" cy="18.7" r="2.6" fill="#777" opacity="0.55"/><circle cx="4" cy="17.8" r="2.6" fill="url(#rb)"/><circle cx="9.3" cy="10.4" r="2.6" fill="#777" opacity="0.55"/><circle cx="8.5" cy="9.5" r="2.6" fill="url(#rb)"/><circle cx="15.8" cy="18.2" r="2.6" fill="#777" opacity="0.55"/><circle cx="15" cy="17.3" r="2.6" fill="url(#rb)"/><circle cx="20.3" cy="5.2" r="2.6" fill="#777" opacity="0.55"/><circle cx="19.5" cy="4.3" r="2.6" fill="url(#rb)"/></svg>
<svg style="left:764px;top:80px" width="24" height="24" viewBox="0 0 24 24"><rect x="4.500" y="4.500" width="16" height="14" fill="none" stroke="#6a6a6a" stroke-width="3"/><rect x="4.500" y="4.500" width="16" height="14" fill="none" stroke="#dcdcdc" stroke-width="0.900"/><circle cx="5.1" cy="19.4" r="2.6" fill="#777" opacity="0.55"/><circle cx="4.3" cy="18.5" r="2.6" fill="url(#rb)"/><circle cx="21.3" cy="5.4" r="2.6" fill="#777" opacity="0.55"/><circle cx="20.5" cy="4.5" r="2.6" fill="url(#rb)"/></svg>
<svg style="left:810px;top:80px" width="24" height="24" viewBox="0 0 24 24"><path d="M6.500 1.500V18.500H22.500" fill="none" stroke="#9a9a9a" stroke-width="1"/><path d="M5.500 3L7.500 2v16.500h14v1.500H5.500z" fill="#f4f4f4" stroke="#a0a0a0" stroke-width="0.600"/><path d="M6.500 5C7 12 11 17 20 18.500" fill="none" stroke="#8a8a8a" stroke-width="1.400"/><path d="M6.500 18.500L10 14" stroke="#aaa" stroke-width="0.600"/><circle cx="7.3" cy="6.4" r="2.6" fill="#777" opacity="0.55"/><circle cx="6.5" cy="5.5" r="2.6" fill="url(#rb)"/><circle cx="20.8" cy="19.2" r="2.6" fill="#777" opacity="0.55"/><circle cx="20" cy="18.3" r="2.6" fill="url(#rb)"/></svg>
<svg style="left:846px;top:80px" width="24" height="24" viewBox="0 0 24 24"><path d="M3 1.500L21.500 22.500" stroke="#8a8a8a" stroke-width="2.600"/><path d="M3 1.500L21.500 22.500" stroke="#f2f2f2" stroke-width="1"/><path d="M16 1.500L7 22.500" stroke="#8a8a8a" stroke-width="2.600"/><path d="M16 1.500L7 22.500" stroke="#f2f2f2" stroke-width="1"/><circle cx="13.100000000000001" cy="12.200000000000001" r="2.4" fill="#777" opacity="0.55"/><circle cx="12.3" cy="11.3" r="2.4" fill="url(#rb)"/></svg>
<svg style="left:883px;top:80px" width="24" height="24" viewBox="0 0 24 24"><path d="M20 18L23 17v3l-3 1.500z" fill="#333"/><path d="M1.500 13.500L11 11.500L21 13.500V20L11.500 23L1.500 20.500z" fill="url(#bx)" stroke="#3a44b8" stroke-width="0.800"/><path d="M1.500 13.500L11.500 16L21 13.500M11.500 16V23" fill="none" stroke="#4a56c8" stroke-width="0.700"/><path d="M1.500 13.500L11 11.500L21 13.500L11.500 16z" fill="#c6ceff"/><path d="M13 12.500L15 7.500" stroke="#1a1a9a" stroke-width="1"/><path d="M9.500 3L22 4" stroke="#10109a" stroke-width="1.800" stroke-dasharray="3 1.500"/><circle cx="10.100000000000001" cy="3.9" r="1.7" fill="#777" opacity="0.55"/><circle cx="9.3" cy="3" r="1.7" fill="url(#rb)"/><circle cx="23.1" cy="4.9" r="1.7" fill="#777" opacity="0.55"/><circle cx="22.3" cy="4" r="1.7" fill="url(#rb)"/></svg>
<svg style="left:920px;top:80px" width="24" height="24" viewBox="0 0 24 24"><rect x="2.500" y="1.500" width="5" height="21" rx="1" fill="#fcfcfc" stroke="#9e9e9e" stroke-width="0.900"/><path d="M9 12l4-3.500v7z" fill="#a8a8a8"/><path d="M13.500 8.500v7" stroke="#c8c8c8" stroke-width="1.200"/><rect x="15.500" y="1.500" width="5" height="4.500" rx="1" fill="#9a9a9a"/><rect x="15.500" y="7" width="5" height="4.500" rx="1" fill="#9a9a9a"/><rect x="15.500" y="12.500" width="5" height="4.500" rx="1" fill="#9a9a9a"/><rect x="15.500" y="18" width="5" height="4.500" rx="1" fill="#9a9a9a"/></svg>
<svg style="left:968px;top:80px" width="24" height="24" viewBox="0 0 24 24"><circle cx="12" cy="12" r="4.800" fill="#9b9b9b" stroke="#858585" stroke-width="0.700"/></svg>
<svg style="left:1004px;top:80px" width="24" height="24" viewBox="0 0 24 24"><path d="M5 22.500C2.500 12 8 2.500 21.500 2.500V6.500C12 6.500 7 13 9.500 22.500z" fill="#9b9b9b" stroke="#858585" stroke-width="0.500"/><circle cx="8" cy="7.500" r="3.700" fill="#a9a9a9" stroke="#858585" stroke-width="0.600"/></svg>
<svg style="left:1040px;top:80px" width="24" height="24" viewBox="0 0 24 24"><rect x="9.500" y="1.500" width="4.800" height="21" rx="0.800" fill="#9b9b9b" stroke="#858585" stroke-width="0.600"/></svg>
<svg style="left:1076px;top:80px" width="24" height="24" viewBox="0 0 24 24"><rect x="1.500" y="9.800" width="21" height="4.800" rx="0.800" fill="#9b9b9b" stroke="#858585" stroke-width="0.600"/></svg>
<svg style="left:1112px;top:80px" width="24" height="24" viewBox="0 0 24 24"><g transform="rotate(-42 12 12)"><rect x="1" y="6" width="22" height="4.600" fill="#9b9b9b" stroke="#858585" stroke-width="0.500"/><rect x="1" y="13.200" width="22" height="4.600" fill="#9b9b9b" stroke="#858585" stroke-width="0.500"/></g></svg>
<svg style="left:1148px;top:80px" width="24" height="24" viewBox="0 0 24 24"><path d="M9.500 2h5v15.500h7.500v4.800h-20v-4.800h7.500z" fill="#9b9b9b" stroke="#858585" stroke-width="0.600"/></svg>
<svg style="left:1196.500px;top:89.500px" width="9" height="6" viewBox="0 0 9 6"><path d="M0.300 0.200h1.800L4.300 3L2.100 5.800H0.300L2.400 3z M4.700 0.200h1.800L8.700 3L6.500 5.800H4.700L6.800 3z" fill="#000"/></svg>
<div class="t" style="left:4.8px;top:117px;font-size:14.5px;line-height:17px;letter-spacing:0.23px;color:#3c3b37;">Combo View</div>
<div class="t" style="left:482.7px;top:44px;font-size:14.5px;line-height:17px;letter-spacing:0.35px;color:#3c3b37;">Part Design</div>
<svg style="left:355px;top:119px" width="29" height="12" viewBox="0 0 29 12"><rect x="0.5" y="0.5" width="10" height="10" rx="2" fill="#f6f5f4" stroke="#7a7872"/><rect x="4.5" y="2.5" width="4" height="4" rx="1" fill="none" stroke="#6a6862"/><rect x="2.5" y="4.5" width="4" height="4" rx="1" fill="#f6f5f4" stroke="#6a6862"/><rect x="17.5" y="0.5" width="10" height="10" rx="2" fill="#f6f5f4" stroke="#7a7872"/><path d="M19.8 2.8l5.400 5.400m0-5.400l-5.400 5.400" stroke="#55534e" stroke-width="2" fill="none"/></svg>
<div class="abs" style="left:4px;top:141px;width:64px;height:25px;background:linear-gradient(#f0efed,#dddbd7);border:1px solid #b9b5ae;border-bottom:none;border-radius:5px 5px 0 0"></div>
<div class="abs" style="left:4px;top:166px;width:382px;height:517px;border:1px solid #b3aea6;border-left-color:#fdfdfd;border-radius:3px;background:#fbfbfa"></div>
<div class="abs" style="left:68px;top:137px;width:50px;height:30px;background:linear-gradient(#fcfcfb,#f4f3f2);border:1px solid #b9b5ae;border-bottom:none;border-radius:5px 5px 0 0"></div>
<div class="abs" style="left:69px;top:165px;width:48px;height:3px;background:#f6f5f4"></div>
<div class="t" style="left:10.2px;top:145px;font-size:14.5px;line-height:17px;letter-spacing:0.65px;color:#3c3b37;">Project</div>
<div class="t" style="left:74.6px;top:144px;font-size:14.5px;line-height:17px;letter-spacing:-0.23px;color:#3c3b37;">Tasks</div>
<div class="abs" style="left:5px;top:168px;width:363px;height:514px;background:#c9c7c4;border-left:1px solid #bdbab6;border-top:1px solid #bdbab6"></div>
<div class="abs" style="left:14px;top:169px;width:345px;height:35px;background:#f2f1f0"></div>
<div class="t" style="left:26.2px;top:176px;font-size:13px;line-height:16px;letter-spacing:0.03px;color:#3c3b37;font-family:'Liberation Serif',serif;">Solved in 0 sec</div>
<div class="abs" style="left:222px;top:169px;width:3px;height:1px;background:#6d7078"></div>
<div class="hdr" style="top:212px"></div>
<div class="t" style="left:43.4px;top:217px;font-size:14.3px;line-height:17px;letter-spacing:0.27px;color:#ffffff;font-weight:bold;">Edit controls</div>
<svg style="left:341px;top:218px" width="14" height="14" viewBox="0 0 14 14"><circle cx="7" cy="6.9" r="6.9" fill="#f4f1ee"/><path d="M3.8 6.4l3.2-3L10.200 6.400M3.800 10.600l3.200-3l3.200 3" fill="none" stroke="#ee6f3d" stroke-width="1.500"/></svg>
<svg style="left:20px;top:214px" width="20" height="22" viewBox="0 0 20 22"><defs><linearGradient id="dg212" x1="0" y1="0" x2="1" y2="1"><stop offset="0" stop-color="#dcdcda"/><stop offset="1" stop-color="#f6f6f5"/></linearGradient><radialGradient id="yg212"><stop offset="0" stop-color="#ffff9a"/><stop offset="0.5" stop-color="#f7ee2a"/><stop offset="1" stop-color="#f7ee2a" stop-opacity="0"/></radialGradient></defs><rect x="1" y="1.5" width="16" height="18.5" fill="url(#dg212)" stroke="#8d8a85" stroke-width="0.8"/><circle cx="14" cy="5" r="4.6" fill="url(#yg212)"/></svg>
<div class="abs" style="left:14px;top:237px;width:345px;height:109px;background:#f2f1f0"></div>
<div class="t" style="left:26.5px;top:256px;font-size:14.5px;line-height:17px;letter-spacing:0.07px;color:#3c3b37;">Grid size:</div>
<div class="combo" style="left:191px;top:251px;width:154px;height:25px"></div>
<div class="t" style="left:195.7px;top:256px;font-size:14.5px;line-height:17px;letter-spacing:0.37px;color:#3c3b37;">10 mm</div>
<svg style="left:331.5px;top:259px" width="8" height="14" viewBox="0 0 8 14"><path d="M0.8 4.4L4 1L7.2 4.4z M0.8 9.8L4 13.2L7.2 9.8z" fill="#6d6b66"/></svg>
<div class="abs" style="left:30px;top:287px;width:14px;height:14px;background:linear-gradient(#ffffff,#f4f3f2);border:1px solid #a8a39b;border-radius:3px"></div>
<div class="t" style="left:51.7px;top:286px;font-size:14.5px;line-height:17px;letter-spacing:-0.00px;color:#3c3b37;">Grid snap</div>
<div class="abs" style="left:30px;top:315px;width:14px;height:14px;background:linear-gradient(#f08a5c,#ea6a36);border:1px solid #b4532c;border-radius:3px"></div>
<svg style="left:30px;top:314px" width="17" height="15" viewBox="0 0 17 15"><path d="M3 7.5l3.2 3.6L14.5 2" fill="none" stroke="#5a2f20" stroke-width="2.2"/></svg>
<div class="t" style="left:52.2px;top:314px;font-size:14.5px;line-height:17px;letter-spacing:0.41px;color:#3c3b37;">Auto constraints</div>
<div class="hdr" style="top:354px"></div>
<div class="t" style="left:43.6px;top:359px;font-size:14.3px;line-height:17px;letter-spacing:0.25px;color:#ffffff;font-weight:bold;">Constraints</div>
<svg style="left:341px;top:360px" width="14" height="14" viewBox="0 0 14 14"><circle cx="7" cy="6.9" r="6.9" fill="#f4f1ee"/><path d="M3.8 6.4l3.2-3L10.200 6.400M3.800 10.600l3.200-3l3.200 3" fill="none" stroke="#ee6f3d" stroke-width="1.500"/></svg>
<svg style="left:20px;top:356px" width="20" height="22" viewBox="0 0 20 22"><defs><linearGradient id="dg354" x1="0" y1="0" x2="1" y2="1"><stop offset="0" stop-color="#dcdcda"/><stop offset="1" stop-color="#f6f6f5"/></linearGradient><radialGradient id="yg354"><stop offset="0" stop-color="#ffff9a"/><stop offset="0.5" stop-color="#f7ee2a"/><stop offset="1" stop-color="#f7ee2a" stop-opacity="0"/></radialGradient></defs><rect x="1" y="1.5" width="16" height="18.5" fill="url(#dg354)" stroke="#8d8a85" stroke-width="0.8"/><circle cx="14" cy="5" r="4.6" fill="url(#yg354)"/></svg>
<div class="abs" style="left:14px;top:379px;width:345px;height:251px;background:#f2f1f0"></div>
<div class="t" style="left:26.0px;top:398px;font-size:14.5px;line-height:17px;letter-spacing:0.80px;color:#3c3b37;">Filter:</div>
<div class="combo" style="left:191px;top:393px;width:154px;height:25px"></div>
<div class="t" style="left:195.1px;top:398px;font-size:14.5px;line-height:17px;letter-spacing:0.84px;color:#3c3b37;">Normal</div>
<svg style="left:331.5px;top:401px" width="8" height="14" viewBox="0 0 8 14"><path d="M0.8 4.4L4 1L7.2 4.4z M0.8 9.8L4 13.2L7.2 9.8z" fill="#6d6b66"/></svg>
<div class="abs" style="left:27px;top:425px;width:319px;height:192px;background:#fff;border:1px solid #b3aea6"></div>
<svg style="left:32px;top:436px" width="23" height="6" viewBox="0 0 23 6"><rect x="0.3" y="0.8" width="21.8" height="4.4" rx="0.8" fill="#f02000" stroke="#9c1400" stroke-width="0.7"/></svg>
<svg style="left:32px;top:462px" width="23" height="6" viewBox="0 0 23 6"><rect x="0.3" y="0.8" width="21.8" height="4.4" rx="0.8" fill="#f02000" stroke="#9c1400" stroke-width="0.7"/></svg>
<svg style="left:40px;top:480px" width="6" height="23" viewBox="0 0 6 23"><rect x="0.5" y="0.3" width="4.2" height="21.6" rx="0.8" fill="#f02000" stroke="#9c1400" stroke-width="0.7"/></svg>
<svg style="left:40px;top:506px" width="6" height="23" viewBox="0 0 6 23"><rect x="0.5" y="0.3" width="4.2" height="21.6" rx="0.8" fill="#f02000" stroke="#9c1400" stroke-width="0.7"/></svg>
<svg style="left:32px;top:535px" width="22" height="18" viewBox="0 0 22 18"><path d="M0.5 0.8L9.5 8.8L0.5 17v-5l3.7-3.2L0.5 5.8z M20.8 0.8L11.8 8.8L20.8 17v-5l-3.7-3.2L20.8 5.8z" fill="#f02000" stroke="#9c1400" stroke-width="0.7"/></svg>
<svg style="left:32px;top:561px" width="22" height="18" viewBox="0 0 22 18"><path d="M0.5 0.8L9.5 8.8L0.5 17v-5l3.7-3.2L0.5 5.8z M20.8 0.8L11.8 8.8L20.8 17v-5l-3.7-3.2L20.8 5.8z" fill="#f02000" stroke="#9c1400" stroke-width="0.7"/></svg>
<div class="t" style="left:61.0px;top:432px;font-size:14.5px;line-height:17px;letter-spacing:0.35px;color:#3c3b37;">Constraint5</div>
<div class="t" style="left:61.0px;top:458px;font-size:14.5px;line-height:17px;letter-spacing:0.35px;color:#3c3b37;">Constraint6</div>
<div class="t" style="left:61.0px;top:484px;font-size:14.5px;line-height:17px;letter-spacing:0.35px;color:#3c3b37;">Constraint7</div>
<div class="t" style="left:61.0px;top:510px;font-size:14.5px;line-height:17px;letter-spacing:0.35px;color:#3c3b37;">Constraint8</div>
<div class="t" style="left:61.0px;top:536px;font-size:14.5px;line-height:17px;letter-spacing:0.35px;color:#3c3b37;">Constraint9</div>
<div class="t" style="left:61.0px;top:562px;font-size:14.5px;line-height:17px;letter-spacing:0.35px;color:#3c3b37;">Constraint10</div>
<div class="hdr" style="top:638px"></div>
<div class="t" style="left:43.5px;top:643px;font-size:14.3px;line-height:17px;letter-spacing:0.39px;color:#ffffff;font-weight:bold;">Create Geometry</div>
<svg style="left:341px;top:644px" width="14" height="14" viewBox="0 0 14 14"><circle cx="7" cy="6.9" r="6.9" fill="#f4f1ee"/><path d="M3.8 6.4l3.2-3L10.200 6.400M3.800 10.600l3.200-3l3.200 3" fill="none" stroke="#ee6f3d" stroke-width="1.500"/></svg>
<svg style="left:18px;top:641px" width="22" height="20" viewBox="0 0 22 20"><defs><linearGradient id="cb1" x1="0" y1="0" x2="1" y2="0"><stop offset="0" stop-color="#ffe600"/><stop offset="1" stop-color="#f0a800"/></linearGradient></defs><path d="M13 17l6-2.5v1.2l-5 2.3z" fill="#5a3a20" opacity="0.7"/><path d="M1 4.5L10 6.5V18L1 15.5z" fill="url(#cb1)" stroke="#a07800" stroke-width="0.6"/><path d="M10 6.5L17.5 3.5V14.5L10 18z" fill="#ffb400" stroke="#a07800" stroke-width="0.6"/><path d="M1 4.5L9 1.5L17.5 3.5L10 6.5z" fill="#ffe94a" stroke="#a07800" stroke-width="0.6"/></svg>
<div class="abs" style="left:14px;top:663px;width:345px;height:19px;background:#f2f1f0"></div>
<div class="abs" style="left:14px;top:663px;width:345px;height:19px;overflow:hidden">
<div class="t" style="left:25.6px;top:9.0px;font-size:14.5px;line-height:17px;letter-spacing:0.18px;color:#3c3b37;">Create sketch</div>
<svg style="left:6px;top:3px" width="16" height="17" viewBox="0 0 16 17"><rect x="1" y="1" width="13" height="14.5" fill="#fdfdfd" stroke="#4a4a48" stroke-width="0.9"/><path d="M14.3 3v13h-11" fill="none" stroke="#9a9a98" stroke-width="1"/><circle cx="8.6" cy="6.2" r="3.6" fill="none" stroke="#e01010" stroke-width="1"/><rect x="3" y="7" width="6.5" height="6" fill="none" stroke="#e01010" stroke-width="1"/></svg>
</div>
<div class="abs" style="left:371px;top:168px;width:13px;height:514px;background:linear-gradient(90deg,#d4d2ce,#e6e4e1 50%,#dad8d4);border:1px solid #b7b3ac;border-radius:6px"></div>
<div class="abs" style="left:371px;top:168px;width:13px;height:14px;background:linear-gradient(90deg,#efeeec,#fafaf9 50%,#ecebe9);border:1px solid #b7b3ac;border-radius:6px 6px 0 0;border-bottom-color:#c9c6c0"></div>
<div class="abs" style="left:371px;top:668px;width:13px;height:14px;background:linear-gradient(90deg,#efeeec,#fafaf9 50%,#ecebe9);border:1px solid #b7b3ac;border-radius:0 0 6px 6px;border-top-color:#c9c6c0"></div>
<div class="abs" style="left:371px;top:261px;width:13px;height:362px;background:linear-gradient(90deg,#fdfdfd,#f6f5f4 50%,#dedcd9);border:1px solid #a9a59e;border-radius:6px"></div>
<svg style="left:375px;top:173.5px" width="5" height="4" viewBox="0 0 5 4"><path d="M0.3 3.5L2.5 0.6L4.7 3.5z" fill="#5d5b57"/></svg>
<svg style="left:375px;top:673px" width="5" height="4" viewBox="0 0 5 4"><path d="M0.3 0.5L2.5 3.4L4.7 0.5z" fill="#5d5b57"/></svg>
<div class="abs" style="left:375px;top:438px;width:5px;height:1px;background:#b9b6b0;box-shadow:0 3px 0 #b9b6b0,0 6px 0 #b9b6b0"></div>
<div class="abs" style="left:388px;top:394px;width:3px;height:1px;background:#c4c1bc;box-shadow:0 3px 0 #c4c1bc,0 6px 0 #c4c1bc"></div>
<div class="abs" style="left:392px;top:111px;width:816px;height:1px;background:#fbfbfa"></div>
<div class="abs" id="view"><svg width="816" height="540" viewBox="392 112 816 540" style="left:0;top:0">
<line x1="463.5" y1="115" x2="463.5" y2="652" stroke="#cbcac4" stroke-width="1" stroke-dasharray="4 4" shape-rendering="crispEdges"/>
<line x1="519.5" y1="115" x2="519.5" y2="652" stroke="#cbcac4" stroke-width="1" stroke-dasharray="4 4" shape-rendering="crispEdges"/>
<line x1="575.5" y1="115" x2="575.5" y2="652" stroke="#cbcac4" stroke-width="1" stroke-dasharray="4 4" shape-rendering="crispEdges"/>
<line x1="631.5" y1="115" x2="631.5" y2="652" stroke="#cbcac4" stroke-width="1" stroke-dasharray="4 4" shape-rendering="crispEdges"/>
<line x1="687.5" y1="115" x2="687.5" y2="652" stroke="#cbcac4" stroke-width="1" stroke-dasharray="4 4" shape-rendering="crispEdges"/>
<line x1="743.5" y1="115" x2="743.5" y2="652" stroke="#cbcac4" stroke-width="1" stroke-dasharray="4 4" shape-rendering="crispEdges"/>
<line x1="856.5" y1="115" x2="856.5" y2="652" stroke="#cbcac4" stroke-width="1" stroke-dasharray="4 4" shape-rendering="crispEdges"/>
<line x1="912.5" y1="115" x2="912.5" y2="652" stroke="#cbcac4" stroke-width="1" stroke-dasharray="4 4" shape-rendering="crispEdges"/>
<line x1="968.5" y1="115" x2="968.5" y2="652" stroke="#cbcac4" stroke-width="1" stroke-dasharray="4 4" shape-rendering="crispEdges"/>
<line x1="1024.5" y1="115" x2="1024.5" y2="652" stroke="#cbcac4" stroke-width="1" stroke-dasharray="4 4" shape-rendering="crispEdges"/>
<line x1="1080.5" y1="115" x2="1080.5" y2="652" stroke="#cbcac4" stroke-width="1" stroke-dasharray="4 4" shape-rendering="crispEdges"/>
<line x1="463" y1="157.5" x2="1137" y2="157.5" stroke="#cbcac4" stroke-width="1" stroke-dasharray="4 4" shape-rendering="crispEdges"/>
<line x1="463" y1="213.5" x2="1137" y2="213.5" stroke="#cbcac4" stroke-width="1" stroke-dasharray="4 4" shape-rendering="crispEdges"/>
<line x1="463" y1="269.5" x2="1137" y2="269.5" stroke="#cbcac4" stroke-width="1" stroke-dasharray="4 4" shape-rendering="crispEdges"/>
<line x1="463" y1="325.5" x2="1137" y2="325.5" stroke="#cbcac4" stroke-width="1" stroke-dasharray="4 4" shape-rendering="crispEdges"/>
<line x1="463" y1="382.5" x2="1137" y2="382.5" stroke="#cbcac4" stroke-width="1" stroke-dasharray="4 4" shape-rendering="crispEdges"/>
<line x1="463" y1="438.5" x2="1137" y2="438.5" stroke="#cbcac4" stroke-width="1" stroke-dasharray="4 4" shape-rendering="crispEdges"/>
<line x1="463" y1="494.5" x2="1137" y2="494.5" stroke="#cbcac4" stroke-width="1" stroke-dasharray="4 4" shape-rendering="crispEdges"/>
<line x1="463" y1="550.5" x2="1137" y2="550.5" stroke="#cbcac4" stroke-width="1" stroke-dasharray="4 4" shape-rendering="crispEdges"/>
<line x1="463" y1="606.5" x2="1137" y2="606.5" stroke="#cbcac4" stroke-width="1" stroke-dasharray="4 4" shape-rendering="crispEdges"/>
<rect x="494" y="381" width="612" height="2" fill="#dc645f"/>
<rect x="799" y="112" width="2" height="540" fill="#62cf6b"/>
<rect x="637.5" y="220.5" width="324" height="324" fill="none" stroke="#fff" stroke-width="3" shape-rendering="crispEdges"/>
<circle cx="711.9" cy="291.7" r="23.85" fill="none" stroke="#fff" stroke-width="2.4"/>
<circle cx="712.5" cy="291.5" r="3.3" fill="#ff2200"/>
<circle cx="866.0" cy="285.7" r="17.0" fill="none" stroke="#fff" stroke-width="2.4"/>
<circle cx="866.4" cy="285.5" r="3.3" fill="#ff2200"/>
<circle cx="707.0" cy="473.8" r="46.95" fill="none" stroke="#fff" stroke-width="2.4"/>
<circle cx="707.5" cy="473.5" r="3.3" fill="#ff2200"/>
<circle cx="895.0" cy="478.8" r="19.05" fill="none" stroke="#fff" stroke-width="2.4"/>
<circle cx="895.4" cy="478.5" r="3.3" fill="#ff2200"/>
<circle cx="800" cy="381.8" r="3.4" fill="#ff2200"/>
<circle cx="638.3" cy="219.6" r="3.4" fill="#ff2200"/>
<circle cx="962.6" cy="219.6" r="3.4" fill="#ff2200"/>
<circle cx="638.4" cy="544" r="3.4" fill="#ff2200"/>
<circle cx="962.5" cy="543.6" r="3.4" fill="#ff2200"/>
<rect x="793" y="205" width="14" height="4" fill="#ff2200"/>
<rect x="793" y="556" width="14" height="4" fill="#ff2200"/>
<rect x="622" y="375" width="3" height="14" fill="#ff2200"/>
<rect x="973" y="375" width="3" height="14" fill="#ff2200"/>
<path d="M793.4 215.2L797.7 220.5L793.4 225.8" fill="none" stroke="#ff2200" stroke-width="3"/><path d="M806.6 215.2L802.3 220.5L806.6 225.8" fill="none" stroke="#ff2200" stroke-width="3"/>
<path d="M630.6999999999999 377.09999999999997L635.0 382.4L630.6999999999999 387.7" fill="none" stroke="#ff2200" stroke-width="3"/><path d="M643.9 377.09999999999997L639.5999999999999 382.4L643.9 387.7" fill="none" stroke="#ff2200" stroke-width="3"/>
<path d="M638.3 219.7L650.8 219.7" stroke="#ff2200" stroke-width="1.6"/><path d="M651.4 219.7L645.8 223.7L645.8 223.7L648.1999999999999 219.7L645.8 215.7z" fill="#ff2200" stroke="#ff2200" stroke-width="0.7" stroke-linejoin="round"/>
<path d="M638 219.7L638.0 232.2" stroke="#ff2200" stroke-width="1.6"/><path d="M638.0 232.79999999999998L634.0 227.2L634.0 227.2L638.0 229.6L642.0 227.2z" fill="#ff2200" stroke="#ff2200" stroke-width="0.7" stroke-linejoin="round"/>
<path d="M962.5 219.7L949.0 219.7" stroke="#ff2200" stroke-width="1.6"/><path d="M948.4 219.7L954.0 215.7L954.0 215.7L951.6 219.7L954.0 223.7z" fill="#ff2200" stroke="#ff2200" stroke-width="0.7" stroke-linejoin="round"/>
<path d="M638.2 544L638.2 531" stroke="#ff2200" stroke-width="1.6"/><path d="M638.2 530.4L642.2 536L642.2 536L638.2 533.6L634.2 536z" fill="#ff2200" stroke="#ff2200" stroke-width="0.7" stroke-linejoin="round"/>
<path d="M1181 606.5V625" stroke="#1c8c1c" stroke-width="2"/><rect x="1179.3" y="609" width="3.6" height="4" fill="#1c8c1c"/>
<path d="M1181 624.8H1199.5" stroke="#8c1c1c" stroke-width="2"/><rect x="1192.6" y="623" width="4" height="3.6" fill="#8c1c1c"/>
<circle cx="1181" cy="624.8" r="2" fill="#1a1a8c"/>
<text x="1183.5" y="607.5" font-family="Liberation Sans" font-size="9.5" fill="#000">Y</text>
<text x="1183.8" y="624" font-family="Liberation Sans" font-size="9.5" fill="#000">Z</text>
<text x="1201.5" y="624" font-family="Liberation Sans" font-size="9.5" fill="#000">X</text>
</svg></div>
<div class="abs" style="left:392px;top:652px;width:816px;height:32px;background:#f2f1f0"></div>
<div class="abs" style="left:392px;top:652px;width:111px;height:30px;background:linear-gradient(#dfddd9,#ecebe8 60%,#f0efed);border:1px solid #bbb7b0;border-top-color:#cfccc7;border-radius:0 0 5px 5px"></div>
<div class="abs" style="left:503px;top:652px;width:210px;height:32px;background:linear-gradient(#fafaf9,#f6f5f4);border:1px solid #bbb7b0;border-top:none;border-radius:0 0 5px 5px"></div>
<div class="t" style="left:399.2px;top:660px;font-size:14.5px;line-height:17px;letter-spacing:0.40px;color:#3c3b37;">Start page</div>
<div class="t" style="left:532.9px;top:661px;font-size:14.5px;line-height:17px;letter-spacing:0.09px;color:#3c3b37;">T19-base-taladros : 1*</div>
<svg style="left:477.5px;top:661.5px" width="13" height="13" viewBox="0 0 13 13"><path d="M2.2 2.2l8.6 8.6m0-8.6l-8.6 8.6" stroke="#5a5853" stroke-width="3.2" fill="none"/></svg>
<svg style="left:688.8px;top:662.5px" width="13" height="13" viewBox="0 0 13 13"><path d="M2.2 2.2l8.6 8.6m0-8.6l-8.6 8.6" stroke="#5a5853" stroke-width="3.2" fill="none"/></svg>
<svg style="left:509px;top:660px" width="17" height="16" viewBox="0 0 17 16"><path d="M1 1h8v3H4.5v2.5H8v3H4.5V12H1z" fill="#e8261a" stroke="#8a1008" stroke-width="0.5"/><g transform="translate(10.3,9.3)"><g fill="#1b3fa0"><rect x="-1.3" y="-5.6" width="2.6" height="3" transform="rotate(0)"/><rect x="-1.3" y="-5.6" width="2.6" height="3" transform="rotate(45)"/><rect x="-1.3" y="-5.6" width="2.6" height="3" transform="rotate(90)"/><rect x="-1.3" y="-5.6" width="2.6" height="3" transform="rotate(135)"/><rect x="-1.3" y="-5.6" width="2.6" height="3" transform="rotate(180)"/><rect x="-1.3" y="-5.6" width="2.6" height="3" transform="rotate(225)"/><rect x="-1.3" y="-5.6" width="2.6" height="3" transform="rotate(270)"/><rect x="-1.3" y="-5.6" width="2.6" height="3" transform="rotate(315)"/></g><circle r="3.9" fill="#1b3fa0"/><circle r="1.7" fill="#f4f4f4"/></g></svg>
</body>
</html>
